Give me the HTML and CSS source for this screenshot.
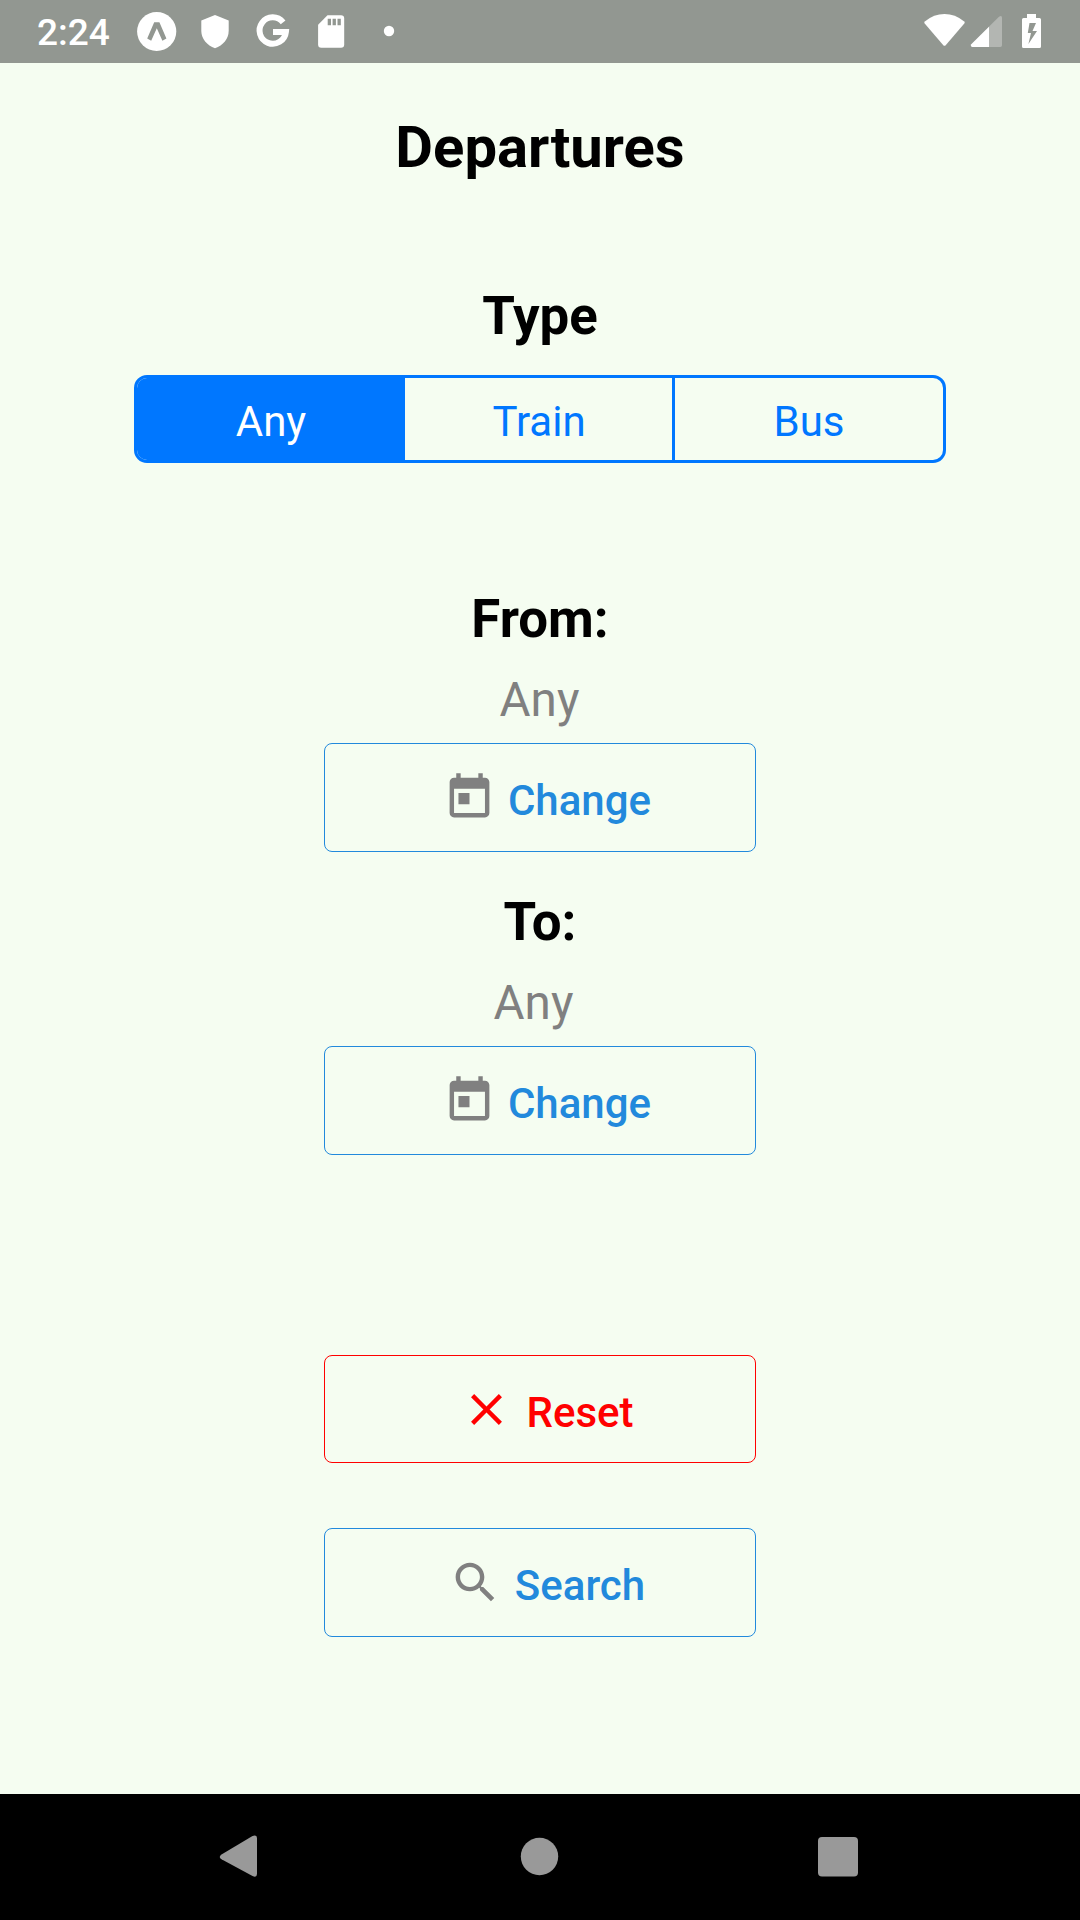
FILE: index.html
```html
<!DOCTYPE html>
<html lang="en">
<head>
<meta charset="utf-8">
<title>Departures</title>
<link rel="stylesheet" href="styles.css">
</head>
<body>
<header class="status">
  <span class="time">2:24</span>
  <svg class="status-left" viewBox="0 0 270 63" width="270" height="63" fill="#fff">
    <circle cx="26.7" cy="31.5" r="19.6"/>
    <path d="M24.2 22.2h5.2l7 16.4-4 2.2-5.6-12.6-5.6 12.6-4-2.2z" fill="#929791"/>
    <path d="M85 15l13.7 5.6v10.2c0 8-5.6 14.8-13.7 17.4-8.100-2.600-13.7-9.400-13.7-17.400V20.600z"/>
    <path d="M153.100 22.300A13.200 13.200 0 1 0 155.900 31.900H143" fill="none" stroke="#fff" stroke-width="6"/>
    <path d="M197.500 15.200h13.500a3.200 3.200 0 0 1 3.200 3.200v26.200a3.200 3.200 0 0 1-3.200 3.200h-19.700a3.200 3.200 0 0 1-3.200-3.200V24.700z"/>
    <path d="M197.700 18.700h3.300v6.600h-3.300zM202.600 18.700h3.300v6.600h-3.300zM207.500 18.700h3.300v6.600h-3.300z" fill="#929791"/>
    <circle cx="259" cy="31" r="5.200"/>
  </svg>
  <svg class="status-right" viewBox="0 0 130 63" width="130" height="63" fill="#fff">
    <path d="M4.800 21.400Q14 14 24.500 14T44.200 21.400Q45.300 22.400 44.300 23.600L25.700 45.200Q24.500 46.400 23.300 45.200L4.700 23.600Q3.700 22.400 4.800 21.400z"/>
    <path d="M51.300 44.300L79 16.700Q82 14.600 82 18V45.300Q82 47 80.300 47H52.300Q50 46.500 51.300 44.300z" opacity=".3"/>
    <path d="M51.300 44.300L69 26.700V47H52.300Q50 46.500 51.300 44.300z"/>
    <path fill-rule="evenodd" d="M107 14h9v4h3.500q1.500 0 1.500 1.500v27q0 1.500-1.500 1.500h-16q-1.500 0-1.500-1.500v-27q0-1.500 1.500-1.500h3.500zM109.500 23l-1.700 10h3.200l-2.600 11 8.600-13h-4.500l3.500-8z"/>
  </svg>
</header>

<main class="screen">
  <h1 class="title">Departures</h1>
  <h2 class="heading type-heading">Type</h2>
  <div class="segments">
    <button class="segment selected">Any</button>
    <button class="segment divided">Train</button>
    <button class="segment">Bus</button>
  </div>

  <section class="stop">
    <h2 class="heading">From:</h2>
    <p class="value">Any</p>
    <button class="button change">
      <svg class="icon" viewBox="0 0 24 24"><path d="M19 3h-1V1h-2v2H8V1H6v2H5c-1.110 0-1.990.9-1.990 2L3 19c0 1.100.890 2 2 2h14c1.100 0 2-.9 2-2V5c0-1.100-.9-2-2-2zm0 16H5V8h14v11zM7 10h5v5H7z"/></svg>
      <span class="label">Change</span>
    </button>
  </section>

  <section class="stop">
    <h2 class="heading">To:</h2>
    <p class="value value-to">Any</p>
    <button class="button change">
      <svg class="icon" viewBox="0 0 24 24"><path d="M19 3h-1V1h-2v2H8V1H6v2H5c-1.110 0-1.990.9-1.990 2L3 19c0 1.100.890 2 2 2h14c1.100 0 2-.9 2-2V5c0-1.100-.9-2-2-2zm0 16H5V8h14v11zM7 10h5v5H7z"/></svg>
      <span class="label">Change</span>
    </button>
  </section>

  <div class="actions">
    <button class="button reset">
      <svg class="icon" viewBox="0 0 24 24"><path d="M19 6.410L17.590 5 12 10.590 6.410 5 5 6.410 10.590 12 5 17.590 6.410 19 12 13.410 17.590 19 19 17.590 13.410 12z"/></svg>
      <span class="label">Reset</span>
    </button>
    <button class="button">
      <svg class="icon" viewBox="0 0 24 24"><path d="M15.500 14h-.790l-.280-.270C15.410 12.590 16 11.110 16 9.500 16 5.910 13.090 3 9.500 3S3 5.910 3 9.500 5.910 16 9.500 16c1.610 0 3.090-.590 4.230-1.570l.270.280v.790l5 4.990L20.490 19l-4.990-5zm-6 0C7.010 14 5 11.990 5 9.500S7.010 5 9.500 5 14 7.010 14 9.500 11.990 14 9.500 14z"/></svg>
      <span class="label">Search</span>
    </button>
  </div>
</main>

<nav class="navbar">
  <svg viewBox="0 0 1080 126" width="1080" height="126" fill="#999">
    <path d="M221.500 60.500L252.500 42Q256.800 40.500 257 44V80Q256.800 84 252.500 82L221.500 65.200Q218 63 221.500 60.500z"/>
    <circle cx="539.500" cy="62.500" r="18.700"/>
    <rect x="818" y="43" width="40" height="39.500" rx="4"/>
  </svg>
</nav>
</body>
</html>
```
FILE: styles.css
```css
* {
  box-sizing: border-box;
}

body {
  margin: 0;
  height: 1920px;
  display: flex;
  flex-direction: column;
  background: #f5fdf1;
  font-family: Roboto, "Liberation Sans", sans-serif;
  color: #000;
}

h1, h2, p {
  margin: 0;
}

button {
  margin: 0;
  padding: 0;
  background: none;
  font-family: inherit;
}

.status {
  display: flex;
  height: 63px;
  background: #929791;
}

.time {
  width: 93px;
  margin-left: 37px;
  font-size: 37px;
  font-weight: 500;
  line-height: 66px;
  color: #fff;
}

.status-right {
  margin-left: auto;
  margin-right: 30px;
}

.screen {
  flex: 1;
  display: flex;
  flex-direction: column;
  align-items: center;
  padding-top: 49px;
}

.title {
  font-size: 58px;
  line-height: 70px;
}

.heading {
  font-size: 52.8px;
  line-height: 62px;
}

.type-heading {
  margin-top: 103px;
}

.segments {
  display: grid;
  grid-template-columns: 268px 270px 268px;
  width: 812px;
  height: 88px;
  margin: 28px 0 85px;
  border: 3px solid #0077ff;
  border-radius: 13px;
  overflow: hidden;
}

.segment {
  border: 0;
  padding-top: 6px;
  font-size: 42px;
  line-height: 76px;
  color: #0077ff;
}

.segment.divided {
  padding-left: 1px;
  border-right: 3px solid #0077ff;
}

.segment.selected {
  background: #0077ff;
  color: #fff;
}

.stop {
  display: flex;
  flex-direction: column;
  align-items: center;
  margin-top: 39px;
}

.segments + .stop {
  margin-top: 40px;
}

.value {
  margin: 22px 0 15px;
  padding-right: 1px;
  font-size: 47.6px;
  line-height: 56px;
  color: #808080;
}

.value-to {
  padding-right: 13px;
}

.button {
  display: flex;
  align-items: center;
  justify-content: center;
  width: 432px;
  height: 109px;
  padding-left: 14px;
  border: 1px solid #2289dc;
  border-radius: 8px;
  color: #2289dc;
}

.icon {
  width: 53px;
  height: 53px;
  margin-right: 13px;
  fill: #808080;
}

.change .icon {
  margin-right: 12px;
}

.label {
  padding-top: 6px;
  font-size: 42px;
  font-weight: 500;
  line-height: 50px;
}

.actions {
  display: flex;
  flex-direction: column;
  gap: 65px;
  margin-top: 200px;
}

.reset {
  height: 108px;
  border-color: #f00;
  color: #f00;
}

.reset .icon {
  fill: #f00;
}

.reset .label {
  padding-top: 8px;
}

.navbar {
  height: 126px;
  background: #000;
}
```
